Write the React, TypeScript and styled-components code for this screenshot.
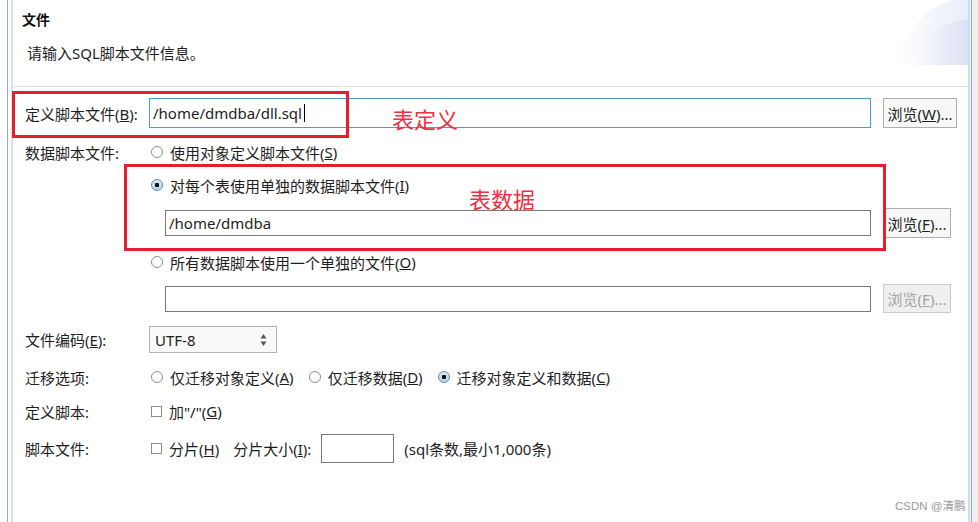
import React from 'react';
import styled, { createGlobalStyle } from 'styled-components';

const Global = createGlobalStyle`
  html, body { margin: 0; padding: 0; background: #fff; overflow: hidden; }
  body {
    font-family: "Noto Sans", "Noto Sans CJK SC", sans-serif;
    font-size: 15px;
    color: #1e1e1e;
  }
  * { box-sizing: border-box; }
`;

const Window = styled.div`
  position: relative;
  width: 978px;
  height: 522px;
  display: flex;
  background: #fff;
`;

const LeftEdge = styled.div`
  width: 6px;
  margin-left: 7px;
  border-left: 1px solid #a8a8a8;
  border-right: 2px solid #cfe5f6;
`;

const RightEdge = styled.div`
  width: 10px;
  border-left: 2px solid #c9e1f4;
  background: linear-gradient(to right, #eef5fb 0 1px, #a3a3a3 1px 2px, #f0f0f0 2px);
`;

const Main = styled.div`
  flex: 1;
  display: flex;
  flex-direction: column;
`;

const Header = styled.div`
  height: 87px;
  border-bottom: 1px solid #e3e3e3;
  display: flex;
  justify-content: space-between;
  align-items: flex-start;
`;

const HeaderText = styled.div`
  padding: 11px 0 0 9px;
  display: flex;
  flex-direction: column;
`;

const Title = styled.div`
  font-weight: bold;
  font-size: 14px;
  line-height: 18px;
  color: #111;
`;

const Subtitle = styled.div`
  margin: 14px 0 0 5px;
  line-height: 20px;
`;

const Body = styled.div`
  padding: 0 0 0 12px;
  display: flex;
  flex-direction: column;
`;

const Row = styled.div<{ $h: number; $mt: number }>`
  display: flex;
  align-items: center;
  height: ${(p) => p.$h}px;
  margin-top: ${(p) => p.$mt}px;
  white-space: nowrap;
`;

const Label = styled.div<{ $w?: number }>`
  width: ${(p) => p.$w ?? 124}px;
  flex-shrink: 0;
`;

const Field = styled.div<{ $w: number; $h: number; $focus?: boolean }>`
  width: ${(p) => p.$w}px;
  height: ${(p) => p.$h}px;
  border: 1px solid ${(p) => (p.$focus ? '#4e9dc9' : '#7a7a7a')};
  background: #fff;
  padding-left: 3px;
  display: flex;
  align-items: center;
  flex-shrink: 0;
`;

const Caret = styled.span`
  display: inline-block;
  width: 1px;
  height: 18px;
  background: #000;
  margin-left: 2px;
`;

const Button = styled.button<{ $w: number; $h: number; $disabled?: boolean }>`
  width: ${(p) => p.$w}px;
  height: ${(p) => p.$h}px;
  margin-left: 12px;
  padding: 0;
  font: inherit;
  font-size: 15px;
  color: ${(p) => (p.$disabled ? '#a3a3a3' : '#1e1e1e')};
  background: ${(p) => (p.$disabled ? '#efefef' : '#f7f7f7')};
  border: 1px solid ${(p) => (p.$disabled ? '#cbcbcb' : '#adadad')};
  border-radius: 0;
  flex-shrink: 0;
  white-space: nowrap;
`;

const Radio = styled.span<{ $checked?: boolean }>`
  width: 12px;
  height: 12px;
  border-radius: 50%;
  flex-shrink: 0;
  margin: 0 7px 0 2px;
  border: 1px solid ${(p) => (p.$checked ? '#6d88a8' : '#8c8c8c')};
  background: ${(p) =>
    p.$checked
      ? 'radial-gradient(circle, #111 0 2px, transparent 2.5px), linear-gradient(#dceaf7, #b8d3ee)'
      : '#fff'};
`;

const Check = styled.span`
  width: 11px;
  height: 11px;
  flex-shrink: 0;
  margin: 0 7px 0 2px;
  border: 1px solid #8c8c8c;
  background: #fff;
`;

const Option = styled.span`
  display: inline-flex;
  align-items: center;
  margin-right: 13px;
`;

const Spacer = styled.span<{ $w: number }>`
  display: inline-block;
  width: ${(p) => p.$w}px;
  flex-shrink: 0;
`;

const Spinner = styled.div`
  width: 128px;
  height: 27px;
  border: 1px solid #b1b1b1;
  background: #f9f9f9;
  display: flex;
  align-items: center;
  justify-content: space-between;
  padding: 0 9px 0 5px;
`;

const Note = styled.span`
  margin-left: 10px;
`;

const Annot = styled.div<{ $x: number; $y: number; $w: number; $h: number }>`
  position: absolute;
  left: ${(p) => p.$x}px;
  top: ${(p) => p.$y}px;
  width: ${(p) => p.$w}px;
  height: ${(p) => p.$h}px;
  border: 3px solid #e61e2d;
  pointer-events: none;
`;

const AnnotText = styled.div<{ $x: number; $y: number }>`
  position: absolute;
  left: ${(p) => p.$x}px;
  top: ${(p) => p.$y}px;
  font-size: 22px;
  line-height: 26px;
  color: #ef2f42;
`;

const Watermark = styled.div`
  position: absolute;
  left: 895px;
  top: 498px;
  font-size: 11.5px;
  line-height: 16px;
  color: #9a9a9a;
  font-family: "Liberation Sans", "Noto Sans CJK SC", sans-serif;
`;

const Decoration = () => (
  <svg width="74" height="65" viewBox="0 0 74 65" style={{ flexShrink: 0 }}>
    <defs>
      <linearGradient id="g1" x1="0" y1="0" x2="1" y2="0">
        <stop offset="0" stopColor="#ffffff" />
        <stop offset="1" stopColor="#e9edf8" />
      </linearGradient>
      <linearGradient id="g2" x1="0" y1="0" x2="1" y2="0">
        <stop offset="0" stopColor="#ffffff" />
        <stop offset="1" stopColor="#dbe1f4" />
      </linearGradient>
    </defs>
    <path d="M0 65 Q18 12 58 0 L74 0 L74 65 Z" fill="url(#g1)" />
    <path d="M12 65 Q30 24 74 20 L74 65 Z" fill="url(#g2)" />
  </svg>
);

const Arrows = () => (
  <svg width="7" height="14" viewBox="0 0 7 14">
    <path d="M3.5 1 L6.5 5.5 L0.5 5.5 Z" fill="#555" />
    <path d="M3.5 13 L6.5 8.5 L0.5 8.5 Z" fill="#555" />
  </svg>
);

export default function App() {
  return (
    <>
      <Global />
      <Window>
        <LeftEdge />
        <Main>
          <Header>
            <HeaderText>
              <Title>文件</Title>
              <Subtitle>请输入SQL脚本文件信息。</Subtitle>
            </HeaderText>
            <Decoration />
          </Header>
          <Body>
            <Row $h={30} $mt={11}>
              <Label>定义脚本文件(<u>B</u>):</Label>
              <Field $w={722} $h={30} $focus>
                /home/dmdba/dll.sql<Caret />
              </Field>
              <Button $w={74} $h={30}>浏览(<u>W</u>)...</Button>
            </Row>
            <Row $h={20} $mt={14}>
              <Label>数据脚本文件:</Label>
              <Radio />
              使用对象定义脚本文件(<u>S</u>)
            </Row>
            <Row $h={20} $mt={13}>
              <Label />
              <Radio $checked />
              对每个表使用单独的数据脚本文件(<u>I</u>)
            </Row>
            <Row $h={30} $mt={13}>
              <Label $w={140} />
              <Field $w={706} $h={26}>/home/dmdba</Field>
              <Button $w={68} $h={30}>浏览(<u>F</u>)...</Button>
            </Row>
            <Row $h={20} $mt={14}>
              <Label />
              <Radio />
              所有数据脚本使用一个单独的文件(<u>O</u>)
            </Row>
            <Row $h={29} $mt={12}>
              <Label $w={140} />
              <Field $w={706} $h={26} />
              <Button $w={68} $h={29} $disabled>浏览(<u>F</u>)...</Button>
            </Row>
            <Row $h={27} $mt={13}>
              <Label>文件编码(<u>E</u>):</Label>
              <Spinner>
                <span>UTF-8</span>
                <Arrows />
              </Spinner>
            </Row>
            <Row $h={20} $mt={14}>
              <Label>迁移选项:</Label>
              <Option><Radio />仅迁移对象定义(<u>A</u>)</Option>
              <Option><Radio />仅迁移数据(<u>D</u>)</Option>
              <Option><Radio $checked />迁移对象定义和数据(<u>C</u>)</Option>
            </Row>
            <Row $h={20} $mt={14}>
              <Label>定义脚本:</Label>
              <Check />
              加"/"(<u>G</u>)
            </Row>
            <Row $h={29} $mt={13}>
              <Label>脚本文件:</Label>
              <Check />
              分片(<u>H</u>)
              <Spacer $w={14} />
              分片大小(<u>I</u>):
              <Spacer $w={10} />
              <Field $w={73} $h={29} />
              <Note>(sql条数,最小1,000条)</Note>
            </Row>
          </Body>
        </Main>
        <RightEdge />
        <Annot $x={12} $y={91} $w={337} $h={47} />
        <AnnotText $x={392} $y={106}>表定义</AnnotText>
        <Annot $x={124} $y={164} $w={762} $h={87} />
        <AnnotText $x={469} $y={186}>表数据</AnnotText>
        <Watermark>CSDN @清鹏</Watermark>
      </Window>
    </>
  );
}
